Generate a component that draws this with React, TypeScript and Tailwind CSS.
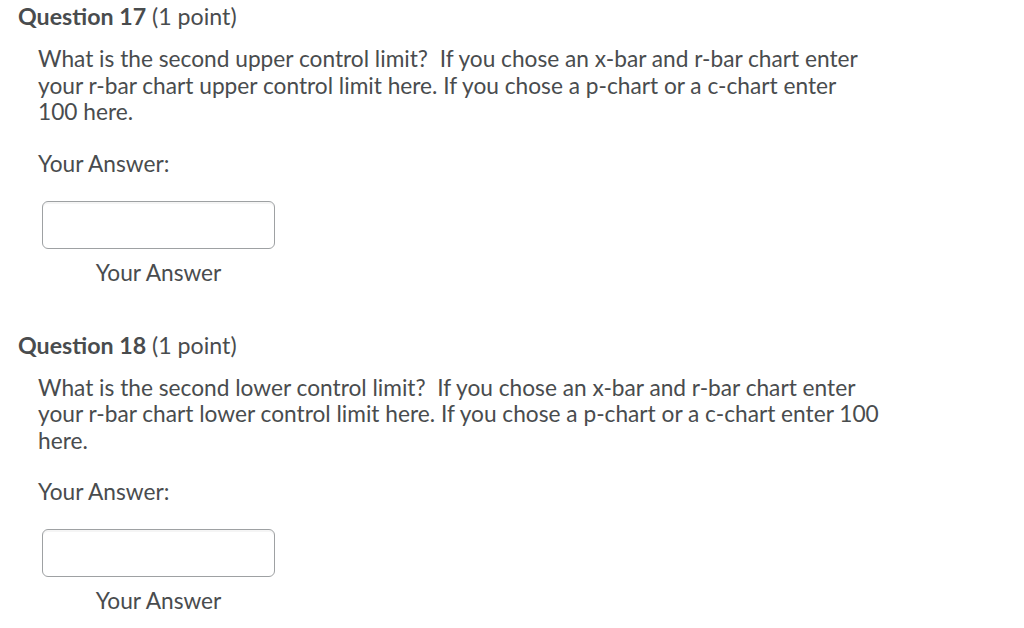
import React from 'react';

const questions = [
  {
    num: 17,
    lines: [
      'What is the second upper control limit?\u00a0 If you chose an x-bar and r-bar chart enter',
      'your r-bar chart upper control limit here. If you chose a p-chart or a c-chart enter',
      '100 here.',
    ],
  },
  {
    num: 18,
    lines: [
      'What is the second lower control limit?\u00a0 If you chose an x-bar and r-bar chart enter',
      'your r-bar chart lower control limit here. If you chose a p-chart or a c-chart enter 100',
      'here.',
    ],
  },
];

const Question: React.FC<{ num: number; lines: string[] }> = ({ num, lines }) => (
  <section className="mb-[46px]">
    <h2 className="text-[23.2px] leading-[26px] pl-[18px]">
      <span className="font-bold">Question {num}</span> (1 point)
    </h2>
    <div className="pl-[38px] mt-[17px]">
      <p className="text-[22.7px] leading-[26.5px]">
        {lines.map((l, i) => (
          <span key={i} className="block">{l}</span>
        ))}
      </p>
      <p className="text-[22.7px] leading-[26px] mt-[25px]">Your Answer:</p>
      <div className="w-[233px] mt-[24px] ml-[4px] flex flex-col items-center">
        <input
          type="text"
          aria-label="Your Answer"
          className="w-full h-[48px] border border-[#9ea1a3] rounded-[6px] bg-white outline-none shadow-[inset_0_2px_0_rgba(0,0,0,0.04)]"
        />
        <span className="text-[22.7px] leading-[26px] mt-[11px]">Your Answer</span>
      </div>
    </div>
  </section>
);

export default function App() {
  return (
    <div className="min-h-screen bg-white text-[#494c4e] font-['Lato',sans-serif] pt-[3px]">
      {questions.map(q => (
        <Question key={q.num} num={q.num} lines={q.lines} />
      ))}
    </div>
  );
}
